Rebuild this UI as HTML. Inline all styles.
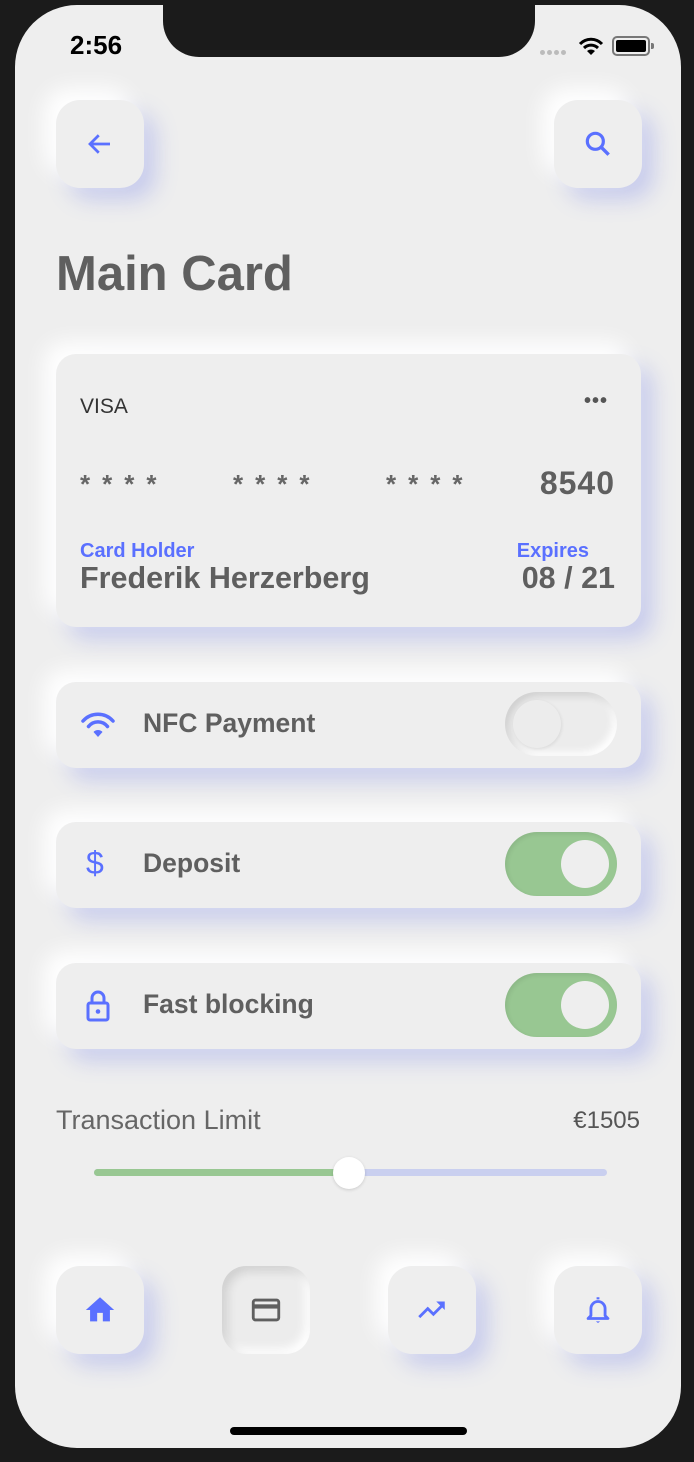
<!DOCTYPE html>
<html><head><style>
*{margin:0;padding:0;box-sizing:border-box}
body{width:694px;height:1462px;background:#1b1b1b;position:relative;overflow:hidden;font-family:"Liberation Sans",sans-serif}
.screen{position:absolute;left:15px;top:5px;width:666px;height:1443px;background:#eeeeee;border-radius:62px;overflow:hidden}
.notch{position:absolute;left:148px;top:0;width:372px;height:52px;background:#1b1b1b;border-radius:0 0 36px 36px}
.abs{position:absolute}
.neu{position:absolute;background:#eeeeee;box-shadow:-12px -12px 22px #ffffff,12px 12px 22px rgba(100,115,235,0.28)}
.btn{width:88px;height:88px;border-radius:24px;display:flex;align-items:center;justify-content:center}
.row{left:41px;width:585px;height:86px;border-radius:20px}
.row .lbl{position:absolute;left:87px;top:26px;font-size:26.5px;font-weight:bold;color:#5f5f5f}
.row .ic{position:absolute;left:24px;top:25px;width:36px;height:36px}
.tog{position:absolute;left:449px;top:10px;width:112px;height:64px;border-radius:32px}
.on{background:#98c792;box-shadow:inset 2px 2px 4px rgba(0,0,0,0.08)}
.on::after{content:"";position:absolute;right:8px;top:8px;width:48px;height:48px;border-radius:50%;background:#eeeeee}
.off{background:#ececec;box-shadow:inset 4px 4px 8px rgba(0,0,0,0.12),inset -4px -4px 8px #fff}
.off::after{content:"";position:absolute;left:8px;top:8px;width:48px;height:48px;border-radius:50%;background:#ececec;box-shadow:1px 1px 3px rgba(0,0,0,0.08)}
</style></head><body>
<div class="screen">
<div class="notch"></div>
<div class="abs" style="left:55px;top:25px;font-size:26px;font-weight:bold;color:#000">2:56</div>
<div class="abs" style="left:525px;top:45px;display:flex;gap:2px"><i style="width:5px;height:5px;border-radius:50%;background:#bbb"></i><i style="width:5px;height:5px;border-radius:50%;background:#bbb"></i><i style="width:5px;height:5px;border-radius:50%;background:#bbb"></i><i style="width:5px;height:5px;border-radius:50%;background:#bbb"></i></div>
<svg class="abs" style="left:563px;top:32px" width="26" height="20" viewBox="0 0 26 20"><path d="M2 7 A15 15 0 0 1 24 7" stroke="#000" stroke-width="3" fill="none"/><path d="M6 11 A10 10 0 0 1 20 11" stroke="#000" stroke-width="3" fill="none"/><path d="M13 18 L9 14 A6 6 0 0 1 17 14Z" fill="#000"/></svg>
<div class="abs" style="left:597px;top:31px;width:38px;height:20px;border:2px solid #777;border-radius:5px;padding:2px"><div style="width:100%;height:100%;background:#000;border-radius:2px"></div></div>
<div class="abs" style="left:636px;top:38px;width:3px;height:6px;background:#777;border-radius:0 2px 2px 0"></div>

<div class="neu btn" style="left:41px;top:95px"><svg width="30" height="30" viewBox="0 0 24 24"><path d="M20 12H5M11 5l-7 7 7 7" stroke="#5a70ff" stroke-width="2.2" fill="none"/></svg></div>
<div class="neu btn" style="left:539px;top:95px"><svg width="32" height="32" viewBox="0 0 24 24"><circle cx="10" cy="10" r="6" stroke="#5a70ff" stroke-width="2.4" fill="none"/><path d="M14.5 14.5L20 20" stroke="#5a70ff" stroke-width="2.6"/></svg></div>

<div class="abs" style="left:41px;top:241px;font-size:49px;font-weight:bold;color:#5f5f5f">Main Card</div>

<div class="neu" style="left:41px;top:349px;width:585px;height:273px;border-radius:20px">
<div class="abs" style="left:24px;top:41px;font-size:21px;color:#333">VISA</div>
<div class="abs" style="left:528px;top:36px;font-size:20px;font-weight:bold;color:#555;letter-spacing:1px">•••</div>
<div class="abs" style="left:24px;top:115px;font-size:26px;font-weight:bold;color:#666;letter-spacing:12px">****</div>
<div class="abs" style="left:177px;top:115px;font-size:26px;font-weight:bold;color:#666;letter-spacing:12px">****</div>
<div class="abs" style="left:330px;top:115px;font-size:26px;font-weight:bold;color:#666;letter-spacing:12px">****</div>
<div class="abs" style="right:26px;top:111px;font-size:32px;font-weight:bold;color:#5f5f5f;letter-spacing:1px">8540</div>
<div class="abs" style="left:24px;top:186px;font-size:20px;font-weight:bold;color:#5a70ff">Card Holder</div>
<div class="abs" style="left:24px;top:207px;font-size:30.5px;font-weight:bold;color:#5f5f5f">Frederik Herzerberg</div>
<div class="abs" style="right:52px;top:186px;font-size:20px;font-weight:bold;color:#5a70ff">Expires</div>
<div class="abs" style="right:26px;top:207px;font-size:30.5px;font-weight:bold;color:#5f5f5f">08 / 21</div>
</div>

<div class="neu row" style="top:677px">
<svg class="ic" viewBox="0 0 36 36"><path d="M3 14 A20 20 0 0 1 33 14" stroke="#5a70ff" stroke-width="3.5" fill="none" stroke-linecap="round"/><path d="M8.5 19.5 A12 12 0 0 1 27.5 19.5" stroke="#5a70ff" stroke-width="3.5" fill="none" stroke-linecap="round"/><path d="M18 30 L13.5 25 A6 6 0 0 1 22.5 25Z" fill="#5a70ff"/></svg>
<div class="lbl">NFC Payment</div><div class="tog off"></div></div>

<div class="neu row" style="top:817px">
<div class="abs" style="left:30px;top:23px;font-size:32px;color:#5a70ff">$</div>
<div class="lbl">Deposit</div><div class="tog on"></div></div>

<div class="neu row" style="top:958px">
<svg class="ic" viewBox="0 0 36 36"><rect x="8" y="15" width="20" height="17" rx="2" stroke="#5a70ff" stroke-width="3" fill="none"/><path d="M12 15V10a6 6 0 0 1 12 0v5" stroke="#5a70ff" stroke-width="3" fill="none"/><circle cx="18" cy="23.5" r="2.3" fill="#5a70ff"/></svg>
<div class="lbl">Fast blocking</div><div class="tog on"></div></div>

<div class="abs" style="left:41px;top:1100px;font-size:27px;color:#666">Transaction Limit</div>
<div class="abs" style="right:41px;top:1102px;font-size:24px;color:#555">€1505</div>
<div class="abs" style="left:79px;top:1164px;width:513px;height:7px;border-radius:4px;background:#c9cfef"></div>
<div class="abs" style="left:79px;top:1164px;width:255px;height:7px;border-radius:4px;background:#98c792"></div>
<div class="abs" style="left:318px;top:1152px;width:32px;height:32px;border-radius:50%;background:#fff;box-shadow:0 1px 3px rgba(0,0,0,0.15)"></div>

<div class="neu btn" style="left:41px;top:1261px"><svg width="34" height="34" viewBox="0 0 24 24"><path d="M10 20v-6h4v6h5v-8h3L12 3 2 12h3v8z" fill="#5a70ff"/></svg></div>
<div class="abs btn" style="left:207px;top:1261px;background:#ececec;box-shadow:inset 5px 5px 10px rgba(0,0,0,0.12),inset -5px -5px 10px #fff;display:flex"><svg width="34" height="34" viewBox="0 0 24 24"><rect x="3" y="5" width="18" height="14" rx="1.5" stroke="#5f5f5f" stroke-width="2" fill="none"/><rect x="3" y="8" width="18" height="3" fill="#5f5f5f"/></svg></div>
<div class="neu btn" style="left:373px;top:1261px"><svg width="34" height="34" viewBox="0 0 24 24"><path d="M3 17l6-6 4 4 7-7" stroke="#5a70ff" stroke-width="2" fill="none"/><path d="M15 6h6v6z" fill="#5a70ff"/></svg></div>
<div class="neu btn" style="left:539px;top:1261px"><svg width="34" height="34" viewBox="0 0 24 24"><path d="M12 3v1.5M7 16V11a5 5 0 0 1 10 0v5l2 2H5z" stroke="#5a70ff" stroke-width="2" fill="none" stroke-linejoin="round"/><path d="M10.5 20h3l-1.5 1.2z" fill="#5a70ff"/></svg></div>

<div class="abs" style="left:215px;top:1422px;width:237px;height:8px;border-radius:4px;background:#000"></div>
</div>
</body></html>
